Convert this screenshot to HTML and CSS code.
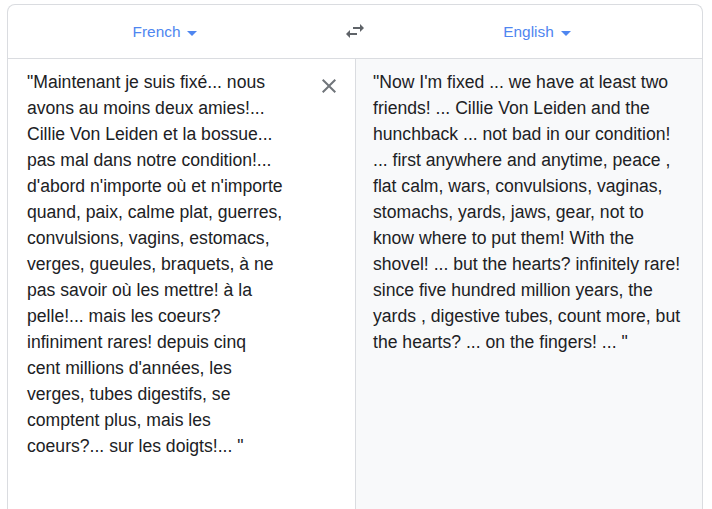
FILE: index.html
```html
<!DOCTYPE html>
<html>
<head>
<meta charset="utf-8">
<link rel="stylesheet" href="styles.css">
</head>
<body>
<div class="card">
  <div class="header">
    <div class="lang"><span class="lang-name">French</span><span class="caret"></span></div>
    <div class="swap">
      <svg width="24" height="24" viewBox="0 0 24 24"><path fill="#5f6368" d="M6.99 11L3 15l3.99 4v-3H14v-2H6.99v-3zM21 9l-3.99-4v3H10v2h7.01v3L21 9z"/></svg>
    </div>
    <div class="lang"><span class="lang-name">English</span><span class="caret"></span></div>
  </div>
  <div class="body">
    <div class="panel source">
      <div class="text">"Maintenant je suis fixé... nous<br>avons au moins deux amies!...<br>Cillie Von Leiden et la bossue...<br>pas mal dans notre condition!...<br>d'abord n'importe où et n'importe<br>quand, paix, calme plat, guerres,<br>convulsions, vagins, estomacs,<br>verges, gueules, braquets, à ne<br>pas savoir où les mettre! à la<br>pelle!... mais les coeurs?<br>infiniment rares! depuis cinq<br>cent millions d'années, les<br>verges, tubes digestifs, se<br>comptent plus, mais les<br>coeurs?... sur les doigts!... "</div>
      <button class="clear" aria-label="Clear">
        <svg width="24" height="24" viewBox="0 0 24 24"><path fill="#70757a" d="M19 6.41L17.59 5 12 10.59 6.41 5 5 6.41 10.59 12 5 17.59 6.41 19 12 13.41 17.59 19 19 17.59 13.41 12z"/></svg>
      </button>
    </div>
    <div class="panel target">
      <div class="text">"Now I'm fixed ... we have at least two<br>friends! ... Cillie Von Leiden and the<br>hunchback ... not bad in our condition!<br>... first anywhere and anytime, peace ,<br>flat calm, wars, convulsions, vaginas,<br>stomachs, yards, jaws, gear, not to<br>know where to put them! With the<br>shovel! ... but the hearts? infinitely rare!<br>since five hundred million years, the<br>yards , digestive tubes, count more, but<br>the hearts? ... on the fingers! ... "</div>
    </div>
  </div>
</div>
</body>
</html>
```
FILE: styles.css
```css
html, body {
  margin: 0;
  padding: 0;
  background: #ffffff;
  font-family: "Liberation Sans", Arial, sans-serif;
  overflow: hidden;
}

.card {
  margin: 4px 9px 0 7px;
  border: 1px solid #dadce0;
  border-bottom: none;
  border-radius: 8px 8px 0 0;
  height: 540px;
  display: flex;
  flex-direction: column;
}

.header {
  height: 53px;
  display: grid;
  grid-template-columns: 314px 50px 1fr;
  align-items: center;
  border-bottom: 1px solid #dadce0;
}

.lang {
  display: flex;
  justify-content: center;
  align-items: center;
  gap: 7px;
  color: #4f86f0;
  font-size: 15.4px;
  padding-top: 1px;
}

.caret {
  width: 0;
  height: 0;
  border-left: 5px solid transparent;
  border-right: 5px solid transparent;
  border-top: 5px solid #4f86f0;
  margin-top: 3px;
}

.swap {
  display: flex;
  padding-left: 21px;
  margin-bottom: 1px;
}

.body {
  flex: 1;
  display: grid;
  grid-template-columns: 1fr 1fr;
}

.panel {
  display: flex;
  align-items: flex-start;
  font-size: 17.6px;
  line-height: 26px;
  color: #202124;
}

.source {
  padding: 10px 0 0 19px;
}

.source .text {
  width: 272px;
  flex: none;
  white-space: nowrap;
}

.clear {
  margin: 5px 0 0 18px;
  padding: 0;
  border: none;
  background: none;
  width: 24px;
  height: 24px;
  display: flex;
  flex: none;
}

.target {
  background: #f8f9fa;
  border-left: 1px solid #dadce0;
  padding: 10px 0 0 17px;
}

.target .text {
  white-space: nowrap;
}
```
